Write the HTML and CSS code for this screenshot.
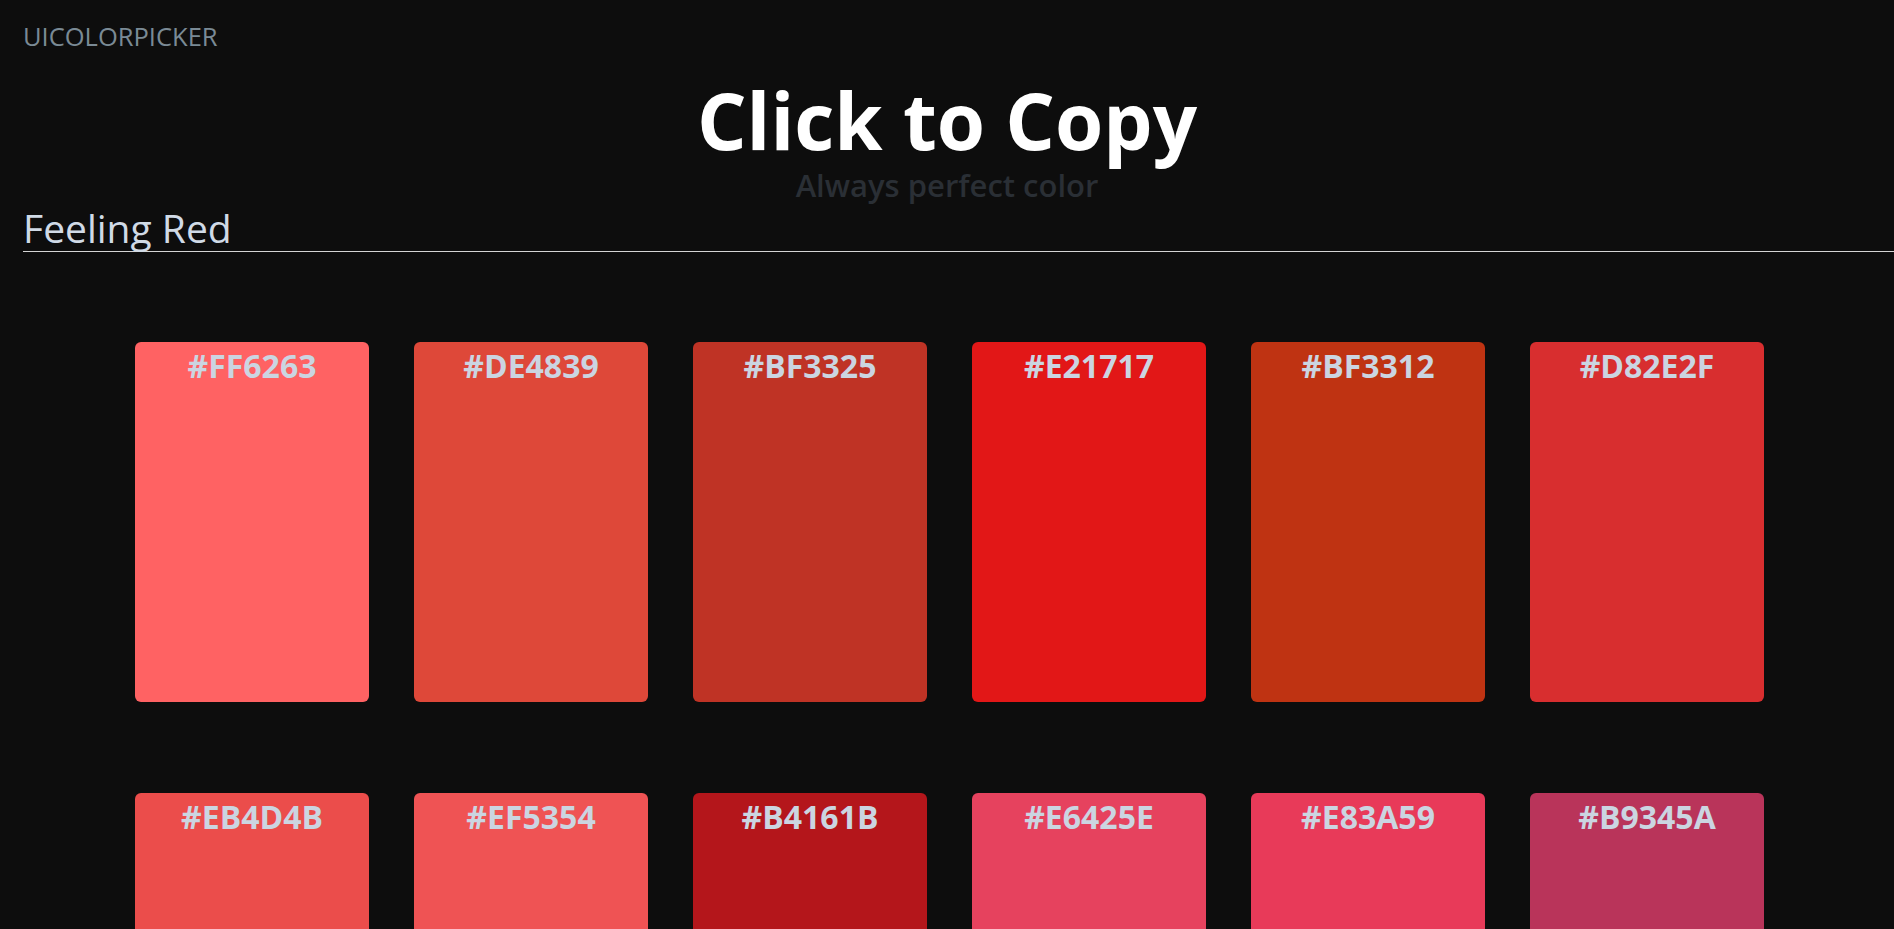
FILE: index.html
```html
<!DOCTYPE html>
<html lang="en">
<head>
<meta charset="utf-8">
<title>UIColorPicker - Feeling Red</title>
<link rel="stylesheet" href="styles.css">
</head>
<body>
  <header class="brand">UICOLORPICKER</header>
  <section class="hero">
    <h1 class="hero-title">Click to Copy</h1>
    <p class="hero-sub">Always perfect color</p>
  </section>
  <h2 class="section-title">Feeling Red</h2>
  <main class="swatch-grid">
    <div class="swatch" style="background:#FF6263"><span class="swatch-label">#FF6263</span></div>
    <div class="swatch" style="background:#DE4839"><span class="swatch-label">#DE4839</span></div>
    <div class="swatch" style="background:#BF3325"><span class="swatch-label">#BF3325</span></div>
    <div class="swatch" style="background:#E21717"><span class="swatch-label">#E21717</span></div>
    <div class="swatch" style="background:#BF3312"><span class="swatch-label">#BF3312</span></div>
    <div class="swatch" style="background:#D82E2F"><span class="swatch-label">#D82E2F</span></div>
    <div class="swatch" style="background:#EB4D4B"><span class="swatch-label">#EB4D4B</span></div>
    <div class="swatch" style="background:#EF5354"><span class="swatch-label">#EF5354</span></div>
    <div class="swatch" style="background:#B4161B"><span class="swatch-label">#B4161B</span></div>
    <div class="swatch" style="background:#E6425E"><span class="swatch-label">#E6425E</span></div>
    <div class="swatch" style="background:#E83A59"><span class="swatch-label">#E83A59</span></div>
    <div class="swatch" style="background:#B9345A"><span class="swatch-label">#B9345A</span></div>
  </main>
</body>
</html>
```
FILE: styles.css
```css
html, body {
  margin: 0;
  padding: 0;
  background: #0d0d0d;
}
body {
  font-family: "Open Sans", "Noto Sans", sans-serif;
  overflow-x: hidden;
}
.brand {
  padding: 19px 0 0 23px;
  font-size: 25.5px;
  line-height: 34px;
  color: #7a8a95;
  font-weight: 400;
}
.hero {
  text-align: center;
  margin-top: 22px;
}
.hero-title {
  margin: 0;
  font-size: 78px;
  line-height: 90px;
  font-weight: 700;
  color: #ffffff;
}
.hero-sub {
  margin: 0;
  font-size: 31px;
  line-height: 40px;
  font-weight: 600;
  color: #2a2f35;
}
.section-title {
  margin: 0 0 0 23px;
  font-size: 39px;
  line-height: 46px;
  font-weight: 400;
  color: #d0dae6;
  border-bottom: 1px solid #d4d4d4;
}
.swatch-grid {
  display: grid;
  grid-template-columns: repeat(6, 234px);
  grid-auto-rows: 360px;
  column-gap: 45px;
  row-gap: 91px;
  margin: 90px 0 0 135px;
  padding-bottom: 60px;
}
.swatch {
  border-radius: 6px;
  text-align: center;
  padding-top: 4px;
}
.swatch-label {
  font-size: 32px;
  line-height: 40px;
  font-weight: 700;
  color: #cbd5e1;
}
```
